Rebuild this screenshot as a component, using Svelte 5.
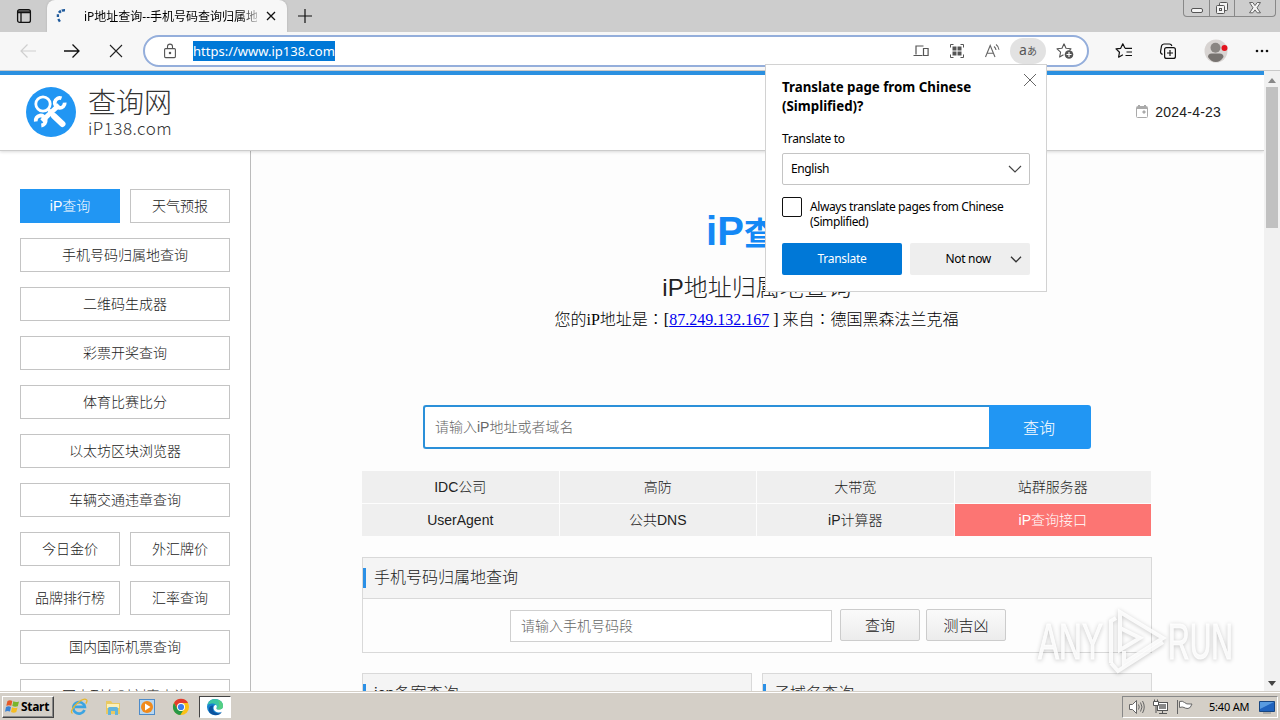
<script>
  const sideLinks = [
    { label: "iP查询", half: true, active: true },
    { label: "天气预报", half: true },
    { label: "手机号码归属地查询" },
    { label: "二维码生成器" },
    { label: "彩票开奖查询" },
    { label: "体育比赛比分" },
    { label: "以太坊区块浏览器" },
    { label: "车辆交通违章查询" },
    { label: "今日金价", half: true },
    { label: "外汇牌价", half: true },
    { label: "品牌排行榜", half: true },
    { label: "汇率查询", half: true },
    { label: "国内国际机票查询" },
    { label: "国内列车时刻表查询" }
  ];

  const promoLinks = [
    "IDC公司",
    "高防",
    "大带宽",
    "站群服务器",
    "UserAgent",
    "公共DNS",
    "iP计算器",
    "iP查询接口"
  ];

  let always = $state(false);
  let popupOpen = $state(true);
</script>

<div class="screen">
  <div class="tabstrip">
    <div class="tab-actions">
      <svg width="16" height="16" viewBox="0 0 16 16" fill="none" stroke="#111" stroke-width="1.3">
        <rect x="1.6" y="1.6" width="12.8" height="12.8" rx="2" />
        <path d="M2 3.2h12M2 4.6h12M5 5v9" />
      </svg>
    </div>
    <div class="tab">
      <svg class="spinner" width="16" height="16" viewBox="0 0 16 16" fill="none" stroke="#1f5a9c">
        <path d="M10 2.200Q6 2 4 4.800" stroke-width="2.600" stroke-dasharray="3.200 .9" />
        <path d="M2.900 6.300v2.600M3.300 11l1.600 2.600" stroke-width="2.300" />
      </svg>
      <span class="tab-title">iP地址查询--手机号码查询归属地</span>
      <svg class="tab-close" width="10" height="10" viewBox="0 0 10 10" stroke="#111" stroke-width="1.3">
        <path d="M1 1l8 8M9 1L1 9" />
      </svg>
    </div>
    <svg class="new-tab" width="16" height="16" viewBox="0 0 16 16" stroke="#111" stroke-width="1.2">
      <path d="M8 1v14M1 8h14" />
    </svg>
    <div class="win-buttons">
      <span class="win-btn">
        <svg width="14" height="15" viewBox="0 0 14 15"><rect x="1.5" y="8.5" width="11" height="4" rx="1.5" fill="#f4f4f4" stroke="#555" /></svg>
      </span>
      <span class="win-btn">
        <svg width="14" height="15" viewBox="0 0 14 15" fill="#f4f4f4" stroke="#555">
          <rect x="4.5" y="2.5" width="8" height="8" rx="1" />
          <rect x="1.5" y="5.5" width="8" height="8" rx="1" />
          <rect x="4.5" y="8.5" width="2" height="2" />
        </svg>
      </span>
      <span class="win-btn wide">
        <svg width="14" height="15" viewBox="0 0 14 15" fill="#f4f4f4" stroke="#666">
          <path d="M1.5 2.5h3.3L7 5.6l2.2-3.1h3.3L9 7.8l3.5 5H9.2L7 9.9l-2.2 2.9H1.5L5 7.8z" />
        </svg>
      </span>
    </div>
  </div>

  <div class="toolbar">
    <svg class="nav-icon" width="18" height="18" viewBox="0 0 18 18" fill="none" stroke="#cfcfcf" stroke-width="1.2"><path d="M17 9H2M8.5 2.5L2 9l6.5 6.5" /></svg>
    <svg class="nav-icon" width="18" height="18" viewBox="0 0 18 18" fill="none" stroke="#111" stroke-width="1.3"><path d="M1 9h15M9.5 2.5L16 9l-6.5 6.5" /></svg>
    <svg class="nav-icon stop" width="16" height="16" viewBox="0 0 16 16" stroke="#222" stroke-width="1.1"><path d="M2 2l12 12M14 2L2 14" /></svg>
    <div class="address">
      <svg class="lock" width="14" height="16" viewBox="0 0 14 16" fill="none" stroke="#555" stroke-width="1.1">
        <rect x="1.6" y="5.6" width="10.8" height="9" rx="1" />
        <path d="M4.5 5.5V3.6a2.5 2.5 0 0 1 5 0v1.9" />
        <circle cx="7" cy="10" r=".7" fill="#555" />
      </svg>
      <span class="url">https://www.ip138.com</span>
      <div class="address-tools">
        <svg width="18" height="16" viewBox="0 0 18 16" fill="none" stroke="#555" stroke-width="1.2">
          <path d="M11.500 3H4v8.500M1.500 12.500h9M11.500 5.500h4.600v7h-4.600z" />
        </svg>
        <svg width="16" height="16" viewBox="0 0 16 16">
          <path d="M1.5 4.5v-3h3M11.500 1.500h3v3M14.500 11.500v3h-3M4.500 14.500h-3v-3" fill="none" stroke="#555" />
          <path d="M3.500 3.500h4v4h-4zM8.500 3.500h4v4h-4zM3.500 8.500h4v4h-4zM8.500 8.500h4v4h-4z" fill="#555" />
        </svg>
        <svg width="17" height="16" viewBox="0 0 17 16" fill="none" stroke="#666" stroke-width="1.1">
          <path d="M1.500 14L6.200 2.500 11 14M3 10.200h6.500M10 3.500q1.800 1.400 2 3.500M12 1.500q2.800 2 3 5.200" />
        </svg>
        <span class="translate-pill">a<small>あ</small></span>
        <svg width="19" height="18" viewBox="0 0 19 18" fill="none" stroke="#555" stroke-width="1.1">
          <path d="M8 1.800l2 4.400 5 .6-1.600 1.500M8 1.800L6 6.200l-5 .6 3.600 3.400-1 4.800 3.900-2.300" stroke-linejoin="round" />
          <circle cx="13" cy="12.500" r="4.300" fill="#555" stroke="none" />
          <path d="M13 10v5M10.500 12.500h5" stroke="#fff" />
        </svg>
      </div>
    </div>
    <div class="browser-tools">
      <svg width="18" height="18" viewBox="0 0 18 18" fill="none" stroke="#111" stroke-width="1.2" stroke-linejoin="round">
        <path d="M10 6.300L7.800 1.800 5.700 6.300 1 6.900l3.500 3.300-.9 5 4.300-2.500M10 6.400h7M11.500 10h5.500M10.500 13.500H17" />
      </svg>
      <svg width="18" height="18" viewBox="0 0 18 18" fill="none" stroke="#111" stroke-width="1.2">
        <rect x="5.600" y="5.600" width="10.800" height="10.800" rx="2" fill="#f7f7f7" />
        <path d="M11 8v6M8 11h6M3.600 12.300A2.500 2.500 0 0 1 1.500 9.800L2.500 4A2.600 2.600 0 0 1 5 2h5.500q1.800 0 2.400 2" />
      </svg>
      <svg width="24" height="24" viewBox="0 0 24 24">
        <circle cx="12" cy="12" r="11.500" fill="#d8d4d2" />
        <circle cx="11.500" cy="8.700" r="5" fill="#8a8683" />
        <path d="M4 18q0-3.500 3.500-3.500h8q4 0 4 3.500-3 5-7.700 5T4 18z" fill="#777370" />
        <circle cx="20.500" cy="9" r="3" fill="#e3131d" />
      </svg>
      <svg width="16" height="4" viewBox="0 0 16 4" fill="#111">
        <circle cx="3" cy="2" r="1.300" /><circle cx="8" cy="2" r="1.300" /><circle cx="13" cy="2" r="1.300" />
      </svg>
    </div>
  </div>

  <div class="viewport">
    <div class="page">
      <header>
        <div class="logo">
          <svg width="50" height="50" viewBox="0 0 50 50" fill="none" stroke="#fff">
            <circle cx="25" cy="25" r="25" fill="#2196f3" stroke="none" />
            <path d="M16 34L33 18" stroke-width="5" />
            <path d="M35.500 11.300A5 5 0 1 0 38.700 15.600M9.800 34.500A5 5 0 1 1 15.300 38.500" stroke-width="3.800" />
            <circle cx="17" cy="17" r="7.200" stroke-width="2.800" fill="#2196f3" />
            <path d="M22 22L27 27.500" stroke-width="3.400" />
            <path d="M28 29L36.500 37" stroke-width="6" stroke-linecap="round" />
          </svg>
          <div class="logo-text">
            <strong>查询网</strong>
            <span>iP138.com</span>
          </div>
        </div>
        <div class="date">
          <svg width="12" height="13" viewBox="0 0 12 13" fill="none" stroke="#aaa">
            <rect x=".5" y="1.500" width="11" height="11" rx="1" />
            <path d="M1 3h10M3 0v2M9 0v2" stroke-width="2" />
            <path d="M7 6h2v2H7z" fill="#aaa" />
          </svg>
          2024-4-23
        </div>
      </header>
      <div class="columns">
        <nav>
          {#each sideLinks as link}
            <a class:half={link.half} class:active={link.active} href="#top">{link.label}</a>
          {/each}
        </nav>
        <main>
          <h1><span>iP</span>查询</h1>
          <h2>iP地址归属地查询</h2>
          <p class="my-ip">您的iP地址是：[<a href="#top">87.249.132.167</a> ] 来自：德国黑森法兰克福</p>
          <form class="search">
            <input type="text" placeholder="请输入iP地址或者域名" />
            <button type="button">查询</button>
          </form>
          <div class="promo">
            {#each promoLinks as label, i}
              <a class:hot={i === 7} href="#top">{label}</a>
            {/each}
          </div>
          <section class="panel">
            <h3>手机号码归属地查询</h3>
            <div class="panel-body">
              <input type="text" placeholder="请输入手机号码段" />
              <button type="button">查询</button>
              <button type="button">测吉凶</button>
            </div>
          </section>
          <div class="panel-row">
            <section class="panel"><h3>icp备案查询</h3></section>
            <section class="panel"><h3>子域名查询</h3></section>
          </div>
        </main>
      </div>
    </div>
    <div class="scrollbar">
      <svg width="8" height="5" viewBox="0 0 8 5"><path d="M0 5L4 0l4 5z" fill="#888" /></svg>
      <div class="thumb"></div>
      <svg class="down" width="8" height="5" viewBox="0 0 8 5"><path d="M0 0h8L4 5z" fill="#444" /></svg>
    </div>
  </div>

  <div class="taskbar">
    <button class="start" type="button">
      <svg width="15" height="15" viewBox="0 0 15 15">
        <path d="M2.500 2Q5 .5 7.300 2L6.300 6.800Q4 5.500 1.300 6.800z" fill="#e65a28" />
        <path d="M8.300 2.300q2.500 1.300 5.700.2l-1.200 4.700q-2.800 1-5.500-.2z" fill="#79b52d" />
        <path d="M1 8q2.600-1.400 5-.1l-1 4.700Q2.500 11.500 0 12.800z" fill="#3a83d5" />
        <path d="M7 8.300q2.700 1.400 5.500.2l-1.200 4.600Q8.600 14.300 6 13z" fill="#f6bd22" />
      </svg>
      Start
    </button>
    <div class="tasks">
      <span class="task">
        <svg width="18" height="18" viewBox="0 0 18 18" fill="none">
          <path d="M14.500 12A5.800 5.800 0 1 1 14.800 8.800H5" stroke="#3ba4e2" stroke-width="2.700" />
          <path d="M2.500 15.500Q-.5 14 5 7.500 13-.5 16.500 1.700q1.200 1-.6 4" stroke="#e6b730" stroke-width="1.300" />
        </svg>
      </span>
      <span class="task">
        <svg width="18" height="18" viewBox="0 0 18 18">
          <path d="M2 3h5l1.500 2H16v11H2z" fill="#e9c962" />
          <path d="M3 6h12v4H3z" fill="#fbf0b9" />
          <path d="M4 17v-6.500q0-1.500 1.500-1.500h7q1.500 0 1.500 1.500V17h-3v-4H7v4z" fill="#62b4dc" />
        </svg>
      </span>
      <span class="task">
        <svg width="18" height="18" viewBox="0 0 18 18">
          <rect x="1.500" y="1.500" width="15" height="15" fill="#b8d7f1" stroke="#4d8bc9" />
          <circle cx="9" cy="9" r="6" fill="#f08a1c" />
          <path d="M7 5.500v7L12.500 9z" fill="#fff" />
        </svg>
      </span>
      <span class="task">
        <svg width="18" height="18" viewBox="0 0 18 18">
          <circle cx="9" cy="9" r="8" fill="#fbc116" />
          <path d="M2 5a8 8 0 0 1 14 0H9a4 4 0 0 0-3.700 5.500z" fill="#e33b2e" />
          <path d="M2 5a8 8 0 0 0 6.300 12l3.300-5.200A4 4 0 0 1 5.500 11z" fill="#279847" />
          <circle cx="9" cy="9" r="4" fill="#fff" /><circle cx="9" cy="9" r="3.100" fill="#3b7ded" />
        </svg>
      </span>
      <span class="task current">
        <svg width="18" height="18" viewBox="0 0 18 18">
          <circle cx="9" cy="9" r="8" fill="#1683cf" />
          <path d="M1.500 7Q3 1 9 1q8 .5 8 7 0 3.500-4 3.500-3 0-2.500-1.500Q11.500 6 7 5.500 3.500 5 1.500 7z" fill="#3cc6a3" />
          <path d="M7 7.500Q5.500 14 11 15.300q3 .6 5-1.300Q13 18 8 17 2 15.500 3 10q1-3 4-2.500z" fill="#0d539e" />
          <path d="M17 8q0 3.500-4 3.500-3 0-2.500-1.500 1-2-.5-3.300Q7 7.500 7.600 11q1.500 4 6.700 3.300L18 13z" fill="#fff" />
          <path d="M12 2q5 1.500 5 6 0 3.500-4 3.500-2 0-2.400-.8Q15 9 12 2z" fill="#55cf83" />
        </svg>
      </span>
    </div>
    <div class="tray">
      <svg width="17" height="16" viewBox="0 0 17 16" fill="#fff" stroke="#666">
        <path d="M1.500 5.500h3l4-4v13l-4-4h-3z" />
        <path d="M10.500 5.500q1.500 2.500 0 5M12.500 3.500q3 4.500 0 9M14.500 2q3.500 6 0 12" fill="none" />
      </svg>
      <svg width="17" height="16" viewBox="0 0 17 16" fill="#fff" stroke="#555">
        <rect x="5.500" y="3.500" width="10" height="8" /><path d="M7 5h7v5H7z" fill="#888" stroke="none" />
        <path d="M7 14.500h8M10.500 12v2M1.500 2.500h5v4h-5zM4 7v7M2.500 2V.5M5.500 2V.5" />
      </svg>
      <svg width="17" height="16" viewBox="0 0 17 16" fill="#fff" stroke="#666">
        <path d="M1.500 1v14M3.500 2.500q3-1 5 1t5.500 1.500h2q-1.500 4.500-4 4.500t-4-1-4.500 0z" />
      </svg>
      <span class="clock">5:40 AM</span>
      <svg class="desktop" width="16" height="16" viewBox="0 0 16 16">
        <path d="M.5 2.500h15v10H.5z" fill="#1f63be" stroke="#174681" />
        <path d="M1 3h14L1 10z" fill="#589be0" /><path d="M4 14h8" stroke="#888" />
      </svg>
    </div>
  </div>

  {#if popupOpen}
    <div class="popup">
      <button class="popup-close" type="button" aria-label="Close" onclick={() => (popupOpen = false)}>
        <svg width="14" height="14" viewBox="0 0 14 14" stroke="#666" stroke-width="1"><path d="M1 1l12 12M13 1L1 13" /></svg>
      </button>
      <h4>Translate page from Chinese<br />(Simplified)?</h4>
      <span class="popup-label">Translate to</span>
      <div class="select">
        <span>English</span>
        <svg width="14" height="8" viewBox="0 0 14 8" fill="none" stroke="#444" stroke-width="1.200"><path d="M1 1l6 6 6-6" /></svg>
      </div>
      <label class="always">
        <input type="checkbox" bind:checked={always} />
        <span>Always translate pages from Chinese<br />(Simplified)</span>
      </label>
      <div class="popup-buttons">
        <button class="primary" type="button">Translate</button>
        <button class="secondary" type="button">
          <span>Not now</span>
          <svg width="12" height="7" viewBox="0 0 12 7" fill="none" stroke="#333" stroke-width="1.300"><path d="M1 .8l5 5 5-5" /></svg>
        </button>
      </div>
    </div>
  {/if}

  <svg class="watermark" width="210" height="76" viewBox="0 0 210 76">
    <g class="mark">
      <text x="8" y="56" textLength="65" lengthAdjust="spacingAndGlyphs">ANY</text>
      <path d="M81 60V18l5-3M90 37V9l43 26-39 25V48M90 25v22l20-12z" />
      <path d="M81 60l7 8 45-29" />
      <text x="138" y="56" textLength="65" lengthAdjust="spacingAndGlyphs">RUN</text>
    </g>
  </svg>
</div>

<style>
  :global(body) {
    overflow: hidden;
  }
  .screen {
    position: relative;
    display: flex;
    flex-direction: column;
    width: 1280px;
    height: 720px;
    overflow: hidden;
    font-family: "Liberation Sans", "Noto Sans CJK SC", sans-serif;
    font-size: 14px;
    color: #222;
  }
  .screen * {
    box-sizing: border-box;
  }
  svg {
    display: block;
    flex-shrink: 0;
  }
  button,
  input {
    font-family: inherit;
    font-weight: inherit;
    margin: 0;
  }

  .tabstrip {
    display: flex;
    height: 32px;
    flex-shrink: 0;
    background: #cdcdcd;
  }
  .tab-actions {
    width: 47px;
    padding: 8px 0 0 16px;
  }
  .tab {
    display: flex;
    align-items: center;
    width: 240px;
    padding: 0 11px 0 8px;
    border-radius: 8px 8px 0 0;
    background: #f7f7f7;
    box-shadow: 0 0 2px #aaa;
  }
  .tab-title {
    flex: 1;
    margin-left: 13px;
    overflow: hidden;
    white-space: nowrap;
    font-family: "Noto Sans", "Noto Sans CJK SC", sans-serif;
    font-size: 12px;
    color: #000;
    mask-image: linear-gradient(90deg, #000 90%, transparent 104%);
  }
  .tab-close {
    margin-left: 9px;
  }
  .new-tab {
    margin: 8px 0 0 10px;
  }
  .win-buttons {
    display: flex;
    height: 17px;
    margin: 0 4px 0 auto;
    border: 1px solid #888;
    border-top: 0;
    border-radius: 0 0 4px 4px;
  }
  .win-btn {
    display: flex;
    justify-content: center;
    width: 25px;
  }
  .win-btn + .win-btn {
    border-left: 1px solid #888;
  }
  .win-btn.wide {
    width: 41px;
  }

  .toolbar {
    display: flex;
    align-items: center;
    height: 39px;
    flex-shrink: 0;
    padding-left: 19px;
    background: #f7f7f7;
    border-bottom: 1px solid #c9c9c9;
  }
  .nav-icon {
    margin-right: 26px;
  }
  .nav-icon.stop {
    margin-right: 19px;
    margin-left: 1px;
  }
  .address {
    display: flex;
    align-items: center;
    width: 946px;
    height: 32px;
    padding: 0 12px 0 18px;
    border: 2px solid #94aedb;
    border-radius: 16px;
    background: #fff;
  }
  .url {
    height: 20px;
    margin-left: 16px;
    background: #0078d7;
    color: #fff;
    font-family: "Noto Sans", sans-serif;
    font-size: 13px;
    line-height: 20px;
  }
  .address-tools {
    display: flex;
    align-items: center;
    gap: 19px;
    margin-left: auto;
  }
  .translate-pill {
    width: 36px;
    height: 26px;
    margin: 0 -9px 0 -10px;
    border-radius: 13px;
    background: #e2e2e2;
    color: #555;
    font-family: "Noto Sans", "Noto Sans CJK JP", sans-serif;
    font-size: 14px;
    line-height: 24px;
    text-align: center;
  }
  .translate-pill small {
    font-size: 10px;
  }
  .browser-tools {
    display: flex;
    align-items: center;
    gap: 26px;
    margin-left: 26px;
  }
  .browser-tools svg:nth-child(3) {
    margin-left: 1px;
  }

  .viewport {
    display: flex;
    height: 621px;
    overflow: hidden;
  }
  .page {
    flex: 1;
    overflow: hidden;
    background: #fdfdfd;
    font-weight: 300;
  }
  header {
    position: relative;
    display: flex;
    justify-content: space-between;
    align-items: center;
    height: 80px;
    padding: 0 43px 2px 26px;
    border-top: 4px solid #2b90e0;
    border-bottom: 1px solid #ccc;
    background: #fff;
    box-shadow: 0 1px 3px rgba(0, 0, 0, 0.15);
  }
  .logo {
    display: flex;
    align-items: center;
    gap: 12px;
  }
  .logo-text {
    display: flex;
    flex-direction: column;
    color: #333;
  }
  .logo-text strong {
    height: 32px;
    font-size: 28px;
    font-weight: 300;
    line-height: 34px;
  }
  .logo-text span {
    height: 18px;
    font-family: "Noto Sans CJK SC", sans-serif;
    font-size: 17px;
    font-weight: 300;
    line-height: 17px;
    letter-spacing: 0.5px;
  }
  .date {
    display: flex;
    align-items: center;
    gap: 7px;
    font-size: 14px;
    letter-spacing: 0.2px;
  }
  .columns {
    display: flex;
  }
  nav {
    display: grid;
    grid-template-columns: 100px 100px;
    grid-auto-rows: 34px;
    gap: 15px 10px;
    width: 251px;
    height: 541px;
    padding: 38px 20px 0;
    border-right: 1px solid #bbb;
    background: #fff;
  }
  nav a {
    grid-column: span 2;
    border: 1px solid #c4c4c4;
    background: #fff;
    color: #222;
    line-height: 32px;
    text-align: center;
    text-decoration: none;
  }
  nav a.half {
    grid-column: span 1;
  }
  nav a.active {
    border-color: #2196f3;
    background: #2196f3;
    color: #fff;
  }

  main {
    flex: 1;
    padding: 56px 112px 0 111px;
  }
  h1,
  h2,
  h3,
  h4,
  p {
    margin: 0;
  }
  h1 {
    height: 48px;
    color: #1488f5;
    font-size: 32px;
    line-height: 48px;
    text-align: center;
  }
  h1 span {
    font-size: 40px;
  }
  h2 {
    height: 36px;
    margin-top: 15px;
    font-size: 24px;
    font-weight: 300;
    line-height: 36px;
    text-align: center;
  }
  .my-ip {
    height: 22px;
    margin-top: 3px;
    padding-right: 1px;
    color: #000;
    font-family: "Liberation Serif", "Noto Sans CJK TC", serif;
    font-size: 16px;
    line-height: 22px;
    text-align: center;
    white-space: pre;
  }
  .my-ip a {
    color: #0000ee;
  }
  .search {
    display: flex;
    width: 668px;
    height: 44px;
    margin: 74px auto 0 61px;
  }
  .search input {
    width: 566px;
    padding: 0 10px;
    border: 2px solid #2b90d9;
    border-right: 0;
    border-radius: 3px 0 0 3px;
    background: #fff;
    font-size: 14px;
    outline: 0;
  }
  .search button {
    flex: 1;
    padding: 0 8px 0 6px;
    border: 0;
    border-radius: 0 3px 3px 0;
    background: #2196f3;
    color: #fff;
    font-size: 16px;
  }
  input::placeholder {
    color: #666;
  }
  .promo {
    display: grid;
    grid-template-columns: repeat(4, 1fr);
    grid-auto-rows: 32px;
    gap: 1px;
    width: 789px;
    margin-top: 22px;
  }
  .promo a {
    background: #efefef;
    color: #222;
    line-height: 32px;
    text-align: center;
    text-decoration: none;
  }
  .promo a.hot {
    background: #fc7573;
    color: #fff;
  }
  .panel {
    margin-top: 21px;
    border: 1px solid #d9d9d9;
  }
  .panel h3 {
    display: flex;
    align-items: center;
    height: 41px;
    padding-bottom: 1px;
    border-bottom: 1px solid #d9d9d9;
    background: #f4f4f4;
    font-size: 16px;
    font-weight: 300;
    line-height: 38px;
  }
  .panel h3::before {
    content: "";
    width: 3px;
    height: 20px;
    margin-right: 8px;
    background: #2b90e6;
  }
  .panel-body {
    display: flex;
    justify-content: center;
    height: 53px;
    padding: 10px 0 0 2px;
  }
  .panel-body input {
    width: 322px;
    height: 32px;
    margin: 1px 8px 0 0;
    padding: 0 10px;
    border: 1px solid #d0d0d0;
    background: #fff;
    font-size: 14px;
  }
  .panel-body button {
    width: 80px;
    height: 32px;
    padding: 0 0 1px;
    border: 1px solid #ccc;
    border-radius: 2px;
    background: linear-gradient(#fafafa, #ececec);
    color: #222;
    font-size: 15px;
  }
  .panel-body button + button {
    margin-left: 6px;
  }
  .panel-row {
    display: grid;
    grid-template-columns: 1fr 1fr;
    gap: 10px;
    margin-top: -1px;
  }
  .scrollbar {
    display: flex;
    flex-direction: column;
    align-items: center;
    width: 16px;
    padding: 7px 0 6px;
    background: #f1f1f1;
  }
  .thumb {
    width: 12px;
    height: 141px;
    margin-top: 4px;
    background: #c1c1c1;
  }
  .scrollbar .down {
    margin-top: auto;
  }

  .taskbar {
    position: relative;
    display: flex;
    align-items: center;
    height: 28px;
    padding: 0 2px;
    border-top: 1px solid #fff;
    background: #d4cfc7;
    box-shadow: 0 -1px 0 #d4cfc7;
  }
  .start {
    display: flex;
    align-items: center;
    gap: 1px;
    width: 52px;
    height: 22px;
    padding: 0 2px;
    border: 1px solid;
    border-color: #fff #444 #444 #fff;
    background: #d4cfc7;
    color: #000;
    box-shadow: inset -1px -1px #888;
    font-family: "Noto Sans", sans-serif;
    font-size: 12px;
    font-weight: 700;
    letter-spacing: -0.3px;
  }
  .tasks {
    display: flex;
    gap: 2px;
    margin-left: 9px;
  }
  .task {
    display: flex;
    align-items: center;
    justify-content: center;
    width: 32px;
    height: 22px;
  }
  .task.current {
    border: 1px solid;
    border-color: #444 #fff #fff #444;
    background: #fff;
  }
  .tray {
    display: flex;
    align-items: center;
    gap: 7px;
    width: 156px;
    height: 22px;
    margin-left: auto;
    padding-left: 5px;
    border: 1px solid;
    border-color: #888 #fff #fff #888;
  }
  .clock {
    margin-left: 9px;
    color: #000;
    font-family: "Noto Sans", sans-serif;
    font-size: 11px;
    letter-spacing: -0.2px;
    white-space: nowrap;
  }
  .desktop {
    margin-left: 3px;
  }

  .popup {
    position: absolute;
    top: 64px;
    left: 765px;
    width: 282px;
    height: 228px;
    padding: 13px 16px 0;
    border: 1px solid #d2d2d2;
    background: #fff;
    color: #000;
    font-family: "Noto Sans", sans-serif;
    font-size: 12px;
    letter-spacing: -0.4px;
  }
  .popup-close {
    position: absolute;
    top: 8px;
    right: 9px;
    padding: 0;
    border: 0;
    background: none;
  }
  .popup h4 {
    font-size: 13.3px;
    font-weight: 700;
    letter-spacing: 0;
    line-height: 19px;
    white-space: nowrap;
  }
  .popup-label {
    display: block;
    margin-top: 14px;
    line-height: 18px;
    letter-spacing: -0.3px;
  }
  .select {
    display: flex;
    align-items: center;
    justify-content: space-between;
    height: 32px;
    margin-top: 5px;
    padding: 0 7px 0 8px;
    border: 1px solid #c4c4c4;
    border-radius: 2px;
  }
  .select span {
    padding-bottom: 2px;
  }
  .always {
    display: flex;
    gap: 8px;
    margin-top: 12px;
    line-height: 15px;
    white-space: nowrap;
  }
  .always input {
    appearance: none;
    width: 20px;
    height: 20px;
    border: 1px solid #111;
    border-radius: 2px;
    background: #fff;
  }
  .always span {
    padding-top: 2px;
  }
  .popup-buttons {
    display: grid;
    grid-template-columns: 1fr 1fr;
    gap: 8px;
    margin-top: 14px;
  }
  .popup-buttons button {
    height: 32px;
    border: 0;
    border-radius: 2px;
    font-size: 12px;
    letter-spacing: -0.3px;
  }
  .popup-buttons .primary {
    padding: 0 0 2px;
    background: #0078d7;
    color: #fff;
  }
  .popup-buttons .secondary {
    display: flex;
    align-items: center;
    justify-content: flex-end;
    gap: 19px;
    padding: 0 8px;
    background: #eee;
    color: #000;
  }
  .secondary span {
    padding-bottom: 2px;
  }

  .watermark {
    position: absolute;
    top: 603px;
    left: 1030px;
    pointer-events: none;
  }
  .mark {
    fill: none;
    stroke: rgba(255, 255, 255, 0.85);
    stroke-width: 4;
    filter: drop-shadow(0 1px 2px rgba(0, 0, 0, 0.24));
  }
  .mark text {
    fill: rgba(255, 255, 255, 0.85);
    stroke-width: 1;
    font-family: "Liberation Sans Narrow", "Liberation Sans", sans-serif;
    font-size: 50px;
  }
</style>
